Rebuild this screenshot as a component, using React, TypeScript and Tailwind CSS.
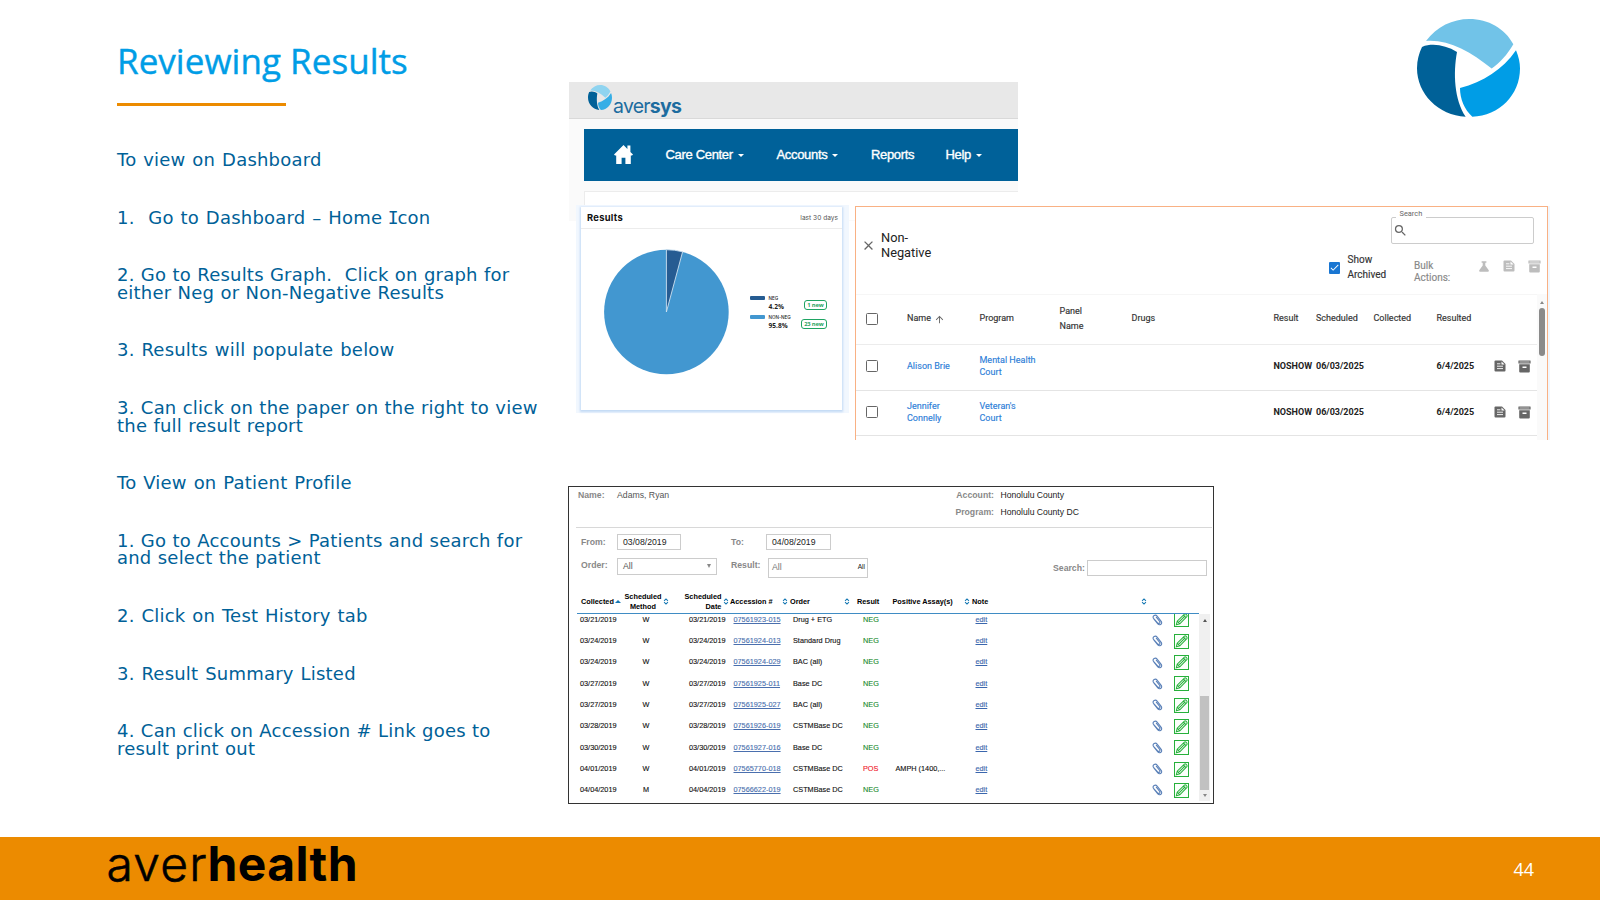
import type { ReactNode } from 'react'
import clsx from 'clsx'
import { MdArrowUpward, MdCheck, MdClose, MdSearch } from 'react-icons/md'

interface HistoryRow {
  date: string
  method: string
  accession: string
  order: string
  result: 'NEG' | 'POS'
  assay?: string
}

const HISTORY: HistoryRow[] = [
  { date: '03/21/2019', method: 'W', accession: '07561923-015', order: 'Drug + ETG', result: 'NEG' },
  { date: '03/24/2019', method: 'W', accession: '07561924-013', order: 'Standard Drug', result: 'NEG' },
  { date: '03/24/2019', method: 'W', accession: '07561924-029', order: 'BAC (all)', result: 'NEG' },
  { date: '03/27/2019', method: 'W', accession: '07561925-011', order: 'Base DC', result: 'NEG' },
  { date: '03/27/2019', method: 'W', accession: '07561925-027', order: 'BAC (all)', result: 'NEG' },
  { date: '03/28/2019', method: 'W', accession: '07561926-019', order: 'CSTMBase DC', result: 'NEG' },
  { date: '03/30/2019', method: 'W', accession: '07561927-016', order: 'Base DC', result: 'NEG' },
  { date: '04/01/2019', method: 'W', accession: '07565770-018', order: 'CSTMBase DC', result: 'POS', assay: 'AMPH (1400,...' },
  { date: '04/04/2019', method: 'M', accession: '07566622-019', order: 'CSTMBase DC', result: 'NEG' },
]

const RESULTS = [
  { name: ['Alison Brie'], program: ['Mental Health', 'Court'] },
  { name: ['Jennifer', 'Connelly'], program: ["Veteran's", 'Court'] },
]

// the capital I carries serifs, as in Verdana
const SERIF_I = <span className="-mx-[0.08em] font-['DejaVu_Sans_Mono',monospace]">I</span>

const STEPS: ReactNode[][] = [
  ['To view on Dashboard'],
  [<>1.&nbsp; Go to Dashboard – Home {SERIF_I}con</>],
  [<>2. Go to Results Graph.&nbsp; Click on graph for</>, 'either Neg or Non-Negative Results'],
  ['3. Results will populate below'],
  ['3. Can click on the paper on the right to view', 'the full result report'],
  ['To View on Patient Profile'],
  ['1. Go to Accounts > Patients and search for', 'and select the patient'],
  ['2. Click on Test History tab'],
  ['3. Result Summary Listed'],
  ['4. Can click on Accession # Link goes to', 'result print out'],
]

const RESULT_GRID = 'grid grid-cols-[51px_72.5px_80px_72px_142px_42.5px_57.5px_63px_57px_24.5px_1fr] items-center'
const HISTORY_GRID = 'grid grid-cols-[56px_53px_44.5px_59.5px_70px_32.5px_80px_176.5px_22px_1fr] items-center'

function Swirl({ className, light = '#71c3e8', blue = '#009de6' }: { className?: string; light?: string; blue?: string }) {
  return (
    <svg viewBox="51 27 309 295" className={className} preserveAspectRatio="none">
      <path fill={light} d="M78 93C110 50 158 27 208 27C265 27 315 56 340 103C322 133 300 160 275 176C210 124 145 88 78 93Z" />
      <path fill="#006198" d="M66 111C100 98 137 107 171 126C159 190 163 270 197 321C115 317 51 252 51 175C51 150 57 130 66 111Z" />
      <path fill={blue} d="M348 121C356 140 360 158 360 176C360 255 298 319 217 321C193 300 180 268 180 235C250 215 308 180 348 121Z" />
    </svg>
  )
}

function Caret() {
  return <span className="mt-[3px] ml-[5px] h-0 w-0 border-x-[3px] border-t-[3px] border-x-transparent border-t-white" />
}

function SiteHeader() {
  return (
    <div className="h-[139px] w-[449px] shrink-0 bg-[#fafafa]">
      <div className="flex h-[37px] border-b border-[#d9d9d9] bg-[#e8e8e8] pl-[19px]">
        <Swirl className="mt-[3px] h-[25px] w-[24px]" light="#8fd4f0" blue="#35aee6" />
        <div className="mt-[11px] ml-px font-['Inter',sans-serif] text-[19.5px] leading-[26px] tracking-[-0.04em] text-[#1d6c9f]">
          aver<b className="font-bold">sys</b>
        </div>
      </div>
      <div className="mt-[9.5px] ml-[14.5px] flex h-[52.5px] items-center bg-[#006199] pb-px font-['Liberation_Sans',Arial,sans-serif] text-[13px] tracking-[-0.025em] text-white [-webkit-text-stroke:0.35px_white]">
        <svg viewBox="0 0 19 19" className="ml-[30.5px] h-[19px] w-[19px] fill-white">
          <path d="M9.5 0L0 9.6L1 10.6H2.2V19H7.6V12.8H11.4V19H16.8V10.6H18L19 9.6L16.4 7V0.6H13.4V4Z" />
        </svg>
        <div className="flex w-[111px] items-center pl-[32.5px] whitespace-nowrap">Care Center<Caret /></div>
        <div className="ml-[32.5px] flex w-[94.5px] items-center whitespace-nowrap">Accounts<Caret /></div>
        <div className="w-[74.5px]">Reports</div>
        <div className="flex items-center">Help<Caret /></div>
      </div>
      <div className="mt-[9.5px] ml-[14.5px] h-[29px] border-t border-l border-[#ececec] bg-white" />
    </div>
  )
}

function LegendItem({ color, label, value, badge }: { color: string; label: string; value: string; badge: string }) {
  return (
    <div className="flex h-[19px] items-start">
      <span className={clsx('mt-[1px] h-[4px] w-[15px] rounded-[1px]', color)} />
      <span className="ml-[4px] w-[30px] text-[#222]">
        <span className="block text-[4.6px] leading-[8px] font-medium">{label}</span>
        <span className="block font-['Open_Sans',sans-serif] text-[6.6px] leading-[8px] font-bold">{value}</span>
      </span>
      <span className="flex w-[28px] justify-end pt-[5px]">
        <span className="flex h-[10px] items-center rounded-[3px] border border-[#1fa463] px-[2px] font-['Open_Sans',sans-serif] text-[5.8px] font-bold tracking-[-0.03em] whitespace-nowrap text-[#1fa463]">
          {badge}
        </span>
      </span>
    </div>
  )
}

function ResultsCard() {
  return (
    <div className="h-[208px] w-[273px] shrink-0 bg-[#f1f7fe] pt-[2px] pl-[5px] font-['Inter',sans-serif]">
      <div className="h-[203px] w-[261px] bg-white shadow-[0_1px_2px_1px_#c3daf5]">
        <div className="flex h-[22px] items-center justify-between border-b border-[#ececec] pt-[2px] pr-[4px] pl-[6px]">
          <span className="text-[9.4px] font-bold tracking-[0.03em] text-[#111]">Results</span>
          <span className="text-[6.6px] text-[#555]">last 30 days</span>
        </div>
        <div className="flex">
          <svg viewBox="-63 -63 126 126" className="mt-[20px] ml-[22px] h-[126px] w-[126px]">
            <circle cx="0.4" r="62.3" fill="#4297d0" />
            <path d="M0.4 0V-62.3A62.3 62.3 0 0 1 16.6 -60.2Z" fill="#265c92" stroke="#cfe2f0" strokeWidth="0.9" />
          </svg>
          <div className="mt-[66px] ml-[20.5px]">
            <LegendItem color="bg-[#265c92]" label="NEG" value="4.2%" badge="1 new" />
            <LegendItem color="bg-[#4297d0]" label="NON-NEG" value="95.8%" badge="23 new" />
          </div>
        </div>
      </div>
    </div>
  )
}

function Box() {
  return <span className="ml-[10px] block h-[12px] w-[12px] rounded-[1.5px] border-[1.4px] border-[#666]" />
}

function Lines({ items }: { items: string[] }) {
  return (
    <span>
      {items.map((t) => (
        <span key={t} className="block whitespace-nowrap">{t}</span>
      ))}
    </span>
  )
}

// sheet with a folded corner and three text lines
function PageIcon({ className }: { className?: string }) {
  return (
    <svg viewBox="0 0 12 12" className={clsx('h-[12px] w-[12px] shrink-0', className)}>
      <path fill="currentColor" d="M1.5 0.5H8L11.5 4V10.5Q11.5 11.5 10.5 11.5H1.5Q0.5 11.5 0.5 10.5V1.5Q0.5 0.5 1.5 0.5Z" />
      <path stroke="white" strokeWidth="0.9" d="M3 3.8H6.4M3 6.2H9M3 8.6H9" />
      <path fill="white" d="M7.5 1.4L10.6 4.5H7.5Z" />
    </svg>
  )
}

// lidded storage box
function BoxIcon({ className }: { className?: string }) {
  return (
    <svg viewBox="0 0 13 13" className={clsx('h-[13px] w-[13px] shrink-0', className)}>
      <path fill="currentColor" fillRule="evenodd" d="M0.8 0.4H12.2Q12.6 0.4 12.6 0.8V3.4H0.4V0.8Q0.4 0.4 0.8 0.4ZM1.2 4.2H11.8V11.6Q11.8 12.6 10.8 12.6H2.2Q1.2 12.6 1.2 11.6ZM4.5 6.6V8H8.5V6.6Z" />
      <path stroke="white" strokeWidth="0.6" d="M1.5 2H11.5" />
    </svg>
  )
}

function NonNegativePanel() {
  return (
    <div className="mt-px ml-[6px] h-[234px] w-[693px] shrink-0 overflow-hidden border-x border-t border-x-[#f9b184] border-t-[#f9b184] bg-white font-['Roboto',sans-serif] text-[9px] text-[#333] shadow-[2px_0_0_#f1f7fe]">
      <div className="flex h-[87px]">
        <MdClose className="mt-[31px] ml-[5px] h-[15px] w-[15px] text-[#666]" />
        <div className="mt-[23px] ml-[5px] w-[430px] text-[12.8px] leading-[15px] text-[#222]">
          Non-<br />Negative
        </div>
        <div className="ml-auto w-[220px]">
          <div className="flex justify-end pt-[10px] pr-[13.5px]">
            <div className="relative h-[27px] w-[143px] rounded-[2px] border border-[#ccc]">
              <span className="absolute -top-[9px] left-[4px] bg-white px-[4px] text-[7.4px] leading-[9px] text-[#666]">Search</span>
              <MdSearch className="mt-[5px] ml-[1px] h-[15px] w-[15px] text-[#666]" />
            </div>
          </div>
          <div className="flex pt-[7px] pl-[1.5px] text-[10px]">
            <span className="mt-[11px] flex h-[11.5px] w-[11.5px] items-center justify-center rounded-[1px] bg-[#1976d2]">
              <MdCheck className="h-[11px] w-[11px] text-white" />
            </span>
            <span className="mt-[0.5px] ml-[7.5px] w-[66.5px] leading-[15px] [-webkit-text-stroke:0.15px_#333]">Show<br />Archived</span>
            <span className="mt-[9px] w-[60.5px] leading-[12px] text-[#888] [-webkit-text-stroke:0.15px_#888]">Bulk<br />Actions:</span>
            <span className="mt-[9px] flex text-[#bdbdbd]">
              <svg viewBox="0 0 12 12" className="mt-[1px] ml-[3.5px] h-[11px] w-[12px] fill-current">
                <path d="M3.4 0.4H8.6V1.8H7.4V5L11.2 10.2Q11.8 11.6 10.4 11.6H1.6Q0.2 11.6 0.8 10.2L4.6 5V1.8H3.4Z" />
              </svg>
              <PageIcon className="ml-[13px]" />
              <BoxIcon className="ml-[12.5px]" />
            </span>
          </div>
        </div>
      </div>
      <div className="flex">
        <div className="w-[681px]">
          <div className={clsx(RESULT_GRID, 'h-[51px] border-t border-b-[1.4px] border-t-[#f6f6f6] border-b-[#ececec] pb-px [-webkit-text-stroke:0.15px_#333]')}>
            <Box />
            <span className="flex items-center">Name <MdArrowUpward className="ml-[3px] h-[11px] w-[11px] text-[#666]" /></span>
            <span>Program</span>
            <span className="-mt-px leading-[15px]">Panel<br />Name</span>
            <span>Drugs</span>
            <span>Result</span>
            <span>Scheduled</span>
            <span>Collected</span>
            <span>Resulted</span>
          </div>
          {RESULTS.map((r) => (
            <div key={r.name[0]} className={clsx(RESULT_GRID, 'h-[45.7px] border-b border-[#e4e4e4] pb-[2px] leading-[12.5px]')}>
              <Box />
              <span className="text-[#2f80d8] [-webkit-text-stroke:0.15px_#2f80d8]"><Lines items={r.name} /></span>
              <span className="text-[#2f80d8] [-webkit-text-stroke:0.15px_#2f80d8]"><Lines items={r.program} /></span>
              <span />
              <span />
              <b className="font-bold text-[#222]">NOSHOW</b>
              <b className="font-bold text-[#222]">06/03/2025</b>
              <span />
              <b className="font-bold text-[#222]">6/4/2025</b>
              <PageIcon className="text-[#666]" />
              <BoxIcon className="text-[#666]" />
            </div>
          ))}
        </div>
        <div className="h-[146px] w-[10px] bg-[#fafafa] pl-[2px]">
          <div className="mt-[7px] ml-[0.5px] h-0 w-0 border-x-[2.5px] border-b-[3px] border-x-transparent border-b-[#888]" />
          <div className="mt-[4px] h-[48px] w-[6px] rounded-full bg-[#8a8a8a]" />
        </div>
      </div>
    </div>
  )
}

function Sort({ className }: { className?: string }) {
  return (
    <svg viewBox="0 0 6 8" className={clsx('h-[7px] w-[6px] shrink-0 fill-none stroke-[#1477b3]', className)} strokeWidth="1.2">
      <path d="M0.8 3.2L3 1L5.2 3.2M0.8 4.8L3 7L5.2 4.8" />
    </svg>
  )
}

function Clip() {
  return (
    <svg viewBox="0 0 11 12" className="h-[12px] w-[11px] fill-none stroke-[#5a80b8]" strokeWidth="1.1" strokeLinecap="round">
      <path d="M2 5.2L5.8 9.8C7.6 11.9 10.9 9.8 9.2 7.4L5.1 2C3.4 -0.1 0 2 1.5 4.4L5.6 8.9C6.8 10.1 8.6 8.9 7.7 7.5L4.3 3.2" />
    </svg>
  )
}

function PencilBox() {
  return (
    <svg viewBox="0 0 15 15" className="h-[15px] w-[15px] fill-none stroke-[#27b03b]">
      <rect x="0.5" y="0.5" width="14" height="14" fill="#fbfffb" />
      <path d="M2.3 12.8L3.2 9.2L10.4 2.2Q11.2 1.5 12 2.2L12.8 3Q13.5 3.8 12.8 4.6L5.8 11.8ZM4.4 10.6L11.3 3.7M3.2 9.2L5.8 11.8M9.4 3.2L11.8 5.6" strokeWidth="1.05" />
    </svg>
  )
}

function Label({ className, children }: { className?: string; children: ReactNode }) {
  return <span className={clsx('font-bold text-[#888]', className)}>{children}</span>
}

function HistoryPanel() {
  return (
    <div className="h-[318px] w-[646px] border border-[#333] bg-white font-['Liberation_Sans',Arial,sans-serif] text-[8.7px] leading-[16.5px] text-[#222]">
      <div className="flex h-[40px]">
        <Label className="ml-[9px] w-[39px]">Name:</Label>
        <span className="w-[319px] text-[#555]">Adams, Ryan</span>
        <div className="w-[58px] text-right"><Label>Account:<br />Program:</Label></div>
        <div className="ml-[6.5px] text-[8.6px]">Honolulu County<br />Honolulu County DC</div>
      </div>
      <div className="mr-px ml-[7px] border-t-[1.4px] border-[#d8d8d8]" />
      <div className="mt-[5.5px] flex h-[17px] items-center">
        <Label className="ml-[12px] w-[36px]">From:</Label>
        <span className="flex h-[16px] w-[64px] items-center border border-[#ccc] pl-[5px]">03/08/2019</span>
        <Label className="ml-[50px] w-[35px]">To:</Label>
        <span className="flex h-[16px] w-[64.5px] items-center border border-[#ccc] pl-[5px]">04/08/2019</span>
      </div>
      <div className="mt-[7px] flex h-[20px] items-start">
        <Label className="-mt-px ml-[12px] w-[36px]">Order:</Label>
        <span className="flex h-[17px] w-[100px] items-center justify-between border border-[#ccc] pr-[5px] pl-[5px] text-[#555]">
          All <span className="h-0 w-0 border-x-[2.5px] border-t-[4px] border-x-transparent border-t-[#888]" />
        </span>
        <Label className="-mt-px ml-[14px] w-[37px]">Result:</Label>
        <span className="flex h-[20px] w-[100px] items-center justify-between border border-[#ccc] pr-[2px] pl-[3px] pb-px text-[#777]">
          All <span className="pt-px text-[6.6px] text-[#222]">All</span>
        </span>
        <Label className="mt-[2px] ml-[185px] w-[34px]">Search:</Label>
        <span className="mt-[2px] h-[16px] w-[120px] border border-[#ccc]" />
      </div>
      <div className="mt-[13px] ml-[12px] flex h-[22px] items-center text-[7.3px] leading-[10px] font-bold whitespace-nowrap text-black">
        <span className="flex w-[43.5px] items-center">
          Collected
          <span className="ml-[1.5px] h-0 w-0 border-x-[3px] border-b-[3px] border-x-transparent border-b-[#1477b3]" />
        </span>
        <span className="flex w-[60px] items-center text-center"><span>Scheduled<br />Method</span><Sort className="ml-[1.5px]" /></span>
        <span className="flex w-[45.5px] items-center text-right"><span>Scheduled<br />Date</span><Sort className="ml-[1.5px]" /></span>
        <span className="flex w-[60px] items-center justify-between">Accession # <Sort className="mr-[2px]" /></span>
        <span className="flex w-[67px] items-center justify-between">Order <Sort className="mr-[7.5px]" /></span>
        <span className="w-[35.5px]">Result</span>
        <span className="flex w-[79.5px] items-center justify-between">Positive Assay(s) <Sort className="mr-[2px]" /></span>
        <span className="flex w-[175px] items-center justify-between">Note <Sort /></span>
      </div>
      <div className="ml-[8px] w-[622px] border-t border-[#3f8cc4]" />
      <div className="flex h-[187px]">
        {/* scrolled down, so the first row is cut by the header */}
        <div className="flex h-[187px] w-[630px] flex-col justify-end overflow-hidden pl-[11px]">
          {HISTORY.map((row) => (
            <div key={row.accession} className={clsx(HISTORY_GRID, 'h-[21.3px] shrink-0 pt-px text-[7.3px] whitespace-nowrap text-[#111] [-webkit-text-stroke:0.12px_currentColor]')}>
              <span>{row.date}</span>
              <span className="w-[19px] pl-[1px] text-center">{row.method}</span>
              <span>{row.date}</span>
              <a className="text-[#4a6fae] underline">{row.accession}</a>
              <span>{row.order}</span>
              <span className={row.result === 'NEG' ? 'text-[#178a2c]' : 'text-[#f0202c]'}>{row.result}</span>
              <span>{row.assay}</span>
              <a className="text-[#3a66ad] underline">edit</a>
              <Clip />
              <PencilBox />
            </div>
          ))}
        </div>
        <div className="flex w-[11px] flex-col items-center bg-[#f0f0f0]">
          <span className="mt-[5px] h-0 w-0 border-x-[2.5px] border-b-[3px] border-x-transparent border-b-[#555]" />
          <span className="mt-[74px] h-[94px] w-[9px] bg-[#c1c1c1]" />
          <span className="mt-[4px] h-0 w-0 border-x-[2.5px] border-t-[3px] border-x-transparent border-t-[#888]" />
        </div>
      </div>
    </div>
  )
}

export default function App() {
  return (
    <div className="flex h-[900px] w-[1600px] flex-col overflow-hidden bg-white">
      <main className="flex h-[836.5px] shrink-0">
        <section className="w-[569px] shrink-0 pt-[36px] pl-[117px]">
          <h1 className="font-['Open_Sans',sans-serif] text-[35px] leading-[50px] tracking-[0.001em] whitespace-nowrap text-[#009de6] [-webkit-text-stroke:0.4px_#009de6]">
            Reviewing Results
          </h1>
          <div className="mt-[17px] h-[3px] w-[169px] bg-[#ec8b00]" />
          <div className="mt-[45px] flex flex-col gap-[40.15px] font-['Verdana','DejaVu_Sans',sans-serif] text-[18px] leading-[17.5px] tracking-[0.012em] whitespace-nowrap text-[#006198]">
            {STEPS.map((lines, i) => (
              <p key={i} className={lines.length > 1 ? '[word-spacing:0.3px]' : '[word-spacing:0.9px]'}>
                {lines.map((line, j) => (
                  <span key={j} className="block">{line}</span>
                ))}
              </p>
            ))}
          </div>
        </section>
        <section className="flex flex-1 flex-col pt-[82px]">
          <div className="flex items-start">
            <SiteHeader />
            <Swirl className="-mt-[63px] ml-auto mr-[80.5px] h-[98px] w-[103px]" />
          </div>
          <div className="relative -mt-[16px] flex pl-[7px]">
            <ResultsCard />
            <NonNegativePanel />
          </div>
          <div className="mt-[46px] -ml-px">
            <HistoryPanel />
          </div>
        </section>
      </main>
      <footer className="flex h-[63px] shrink-0 items-center justify-between bg-[#ec8b00] pr-[66px] pl-[106.5px]">
        <div className="-mt-[9px] font-['Inter',sans-serif] text-[48px] leading-[62px] font-light tracking-[0.024em] text-black [-webkit-text-stroke:0.6px_black]">
          aver<b className="font-bold tracking-[0.008em] [-webkit-text-stroke:0px]">health</b>
        </div>
        <span className="mt-[2px] font-['Open_Sans',sans-serif] text-[18px] text-white">44</span>
      </footer>
    </div>
  )
}
